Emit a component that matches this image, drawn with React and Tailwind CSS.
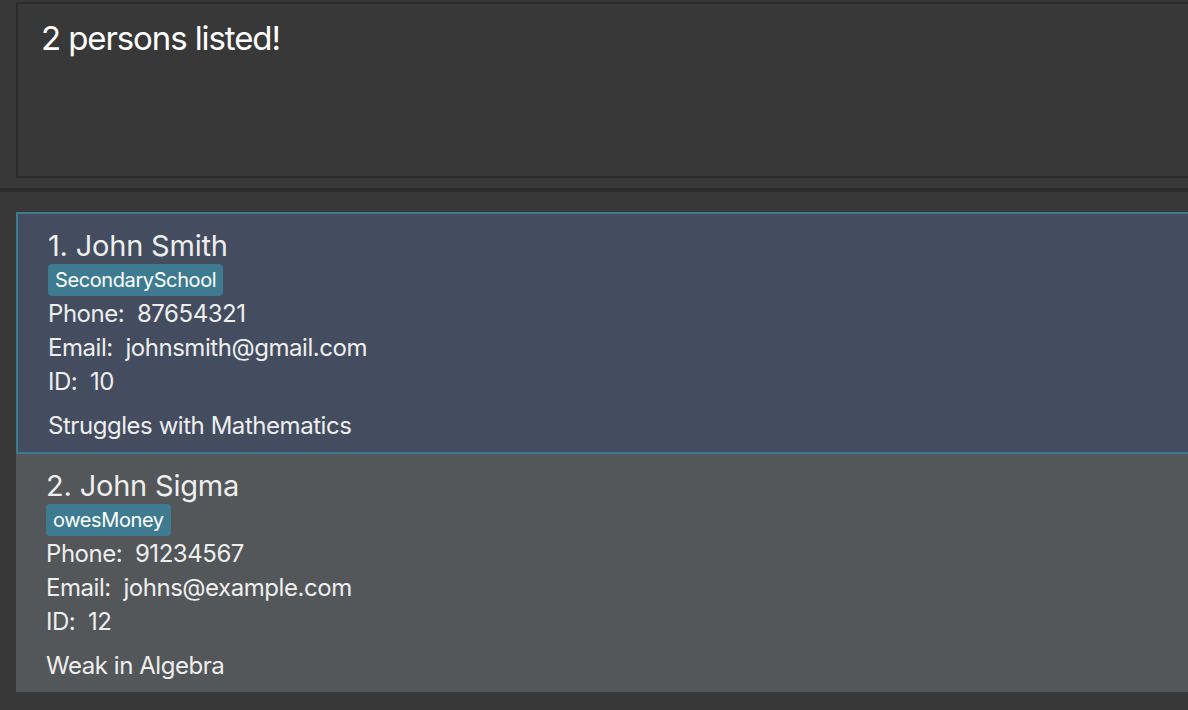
const persons = [
  {
    name: "John Smith",
    tag: "SecondarySchool",
    phone: "87654321",
    email: "johnsmith@gmail.com",
    id: "10",
    note: "Struggles with Mathematics",
  },
  {
    name: "John Sigma",
    tag: "owesMoney",
    phone: "91234567",
    email: "johns@example.com",
    id: "12",
    note: "Weak in Algebra",
  },
];

function PersonCard({ person, index, selected }) {
  return (
    <div
      className={
        selected
          ? "h-[242px] border-2 border-r-0 border-[#3e7b91] bg-[#434d5f] pl-[30px] pt-[14px]"
          : "h-[238px] bg-[#53575a] pl-[30px] pt-[14px]"
      }
    >
      <div className="text-[29px] leading-[35px] tracking-[-0.2px] text-[#eeeeee]">
        {index}. {person.name}
      </div>
      <div className="mt-[1px] flex">
        <span className="h-[32px] rounded-[4px] bg-[#3e7b91] px-[7px] text-[20px] leading-[32px] tracking-[-0.4px] text-white">
          {person.tag}
        </span>
      </div>
      <div className="pt-[1px] text-[24px] leading-[34px] tracking-[-0.45px] text-[#eeeeee]">
        <div>Phone:&nbsp; {person.phone}</div>
        <div>Email:&nbsp; {person.email}</div>
        <div>ID:&nbsp; {person.id}</div>
        <div className="mt-[10px]">{person.note}</div>
      </div>
    </div>
  );
}

export default function App() {
  return (
    <div
      className="h-[710px] w-[1188px] overflow-hidden bg-[#383838]"
      style={{ fontFamily: "Inter, 'Noto Sans', sans-serif" }}
    >
      <div className="pl-4 pt-[2px]">
        <div className="h-[176px] border-2 border-r-0 border-[#2b2b2b] bg-[#383838] pl-[23px] pt-[14px]">
          <div className="text-[33px] leading-[41px] tracking-[-1.1px] text-white">
            2 persons listed!
          </div>
        </div>
      </div>
      <div className="mt-[10px] h-[4px] bg-[#2b2b2b]" />
      <div className="ml-4 mt-[20px]">
        {persons.map((p, i) => (
          <PersonCard key={p.id} person={p} index={i + 1} selected={i === 0} />
        ))}
      </div>
    </div>
  );
}
